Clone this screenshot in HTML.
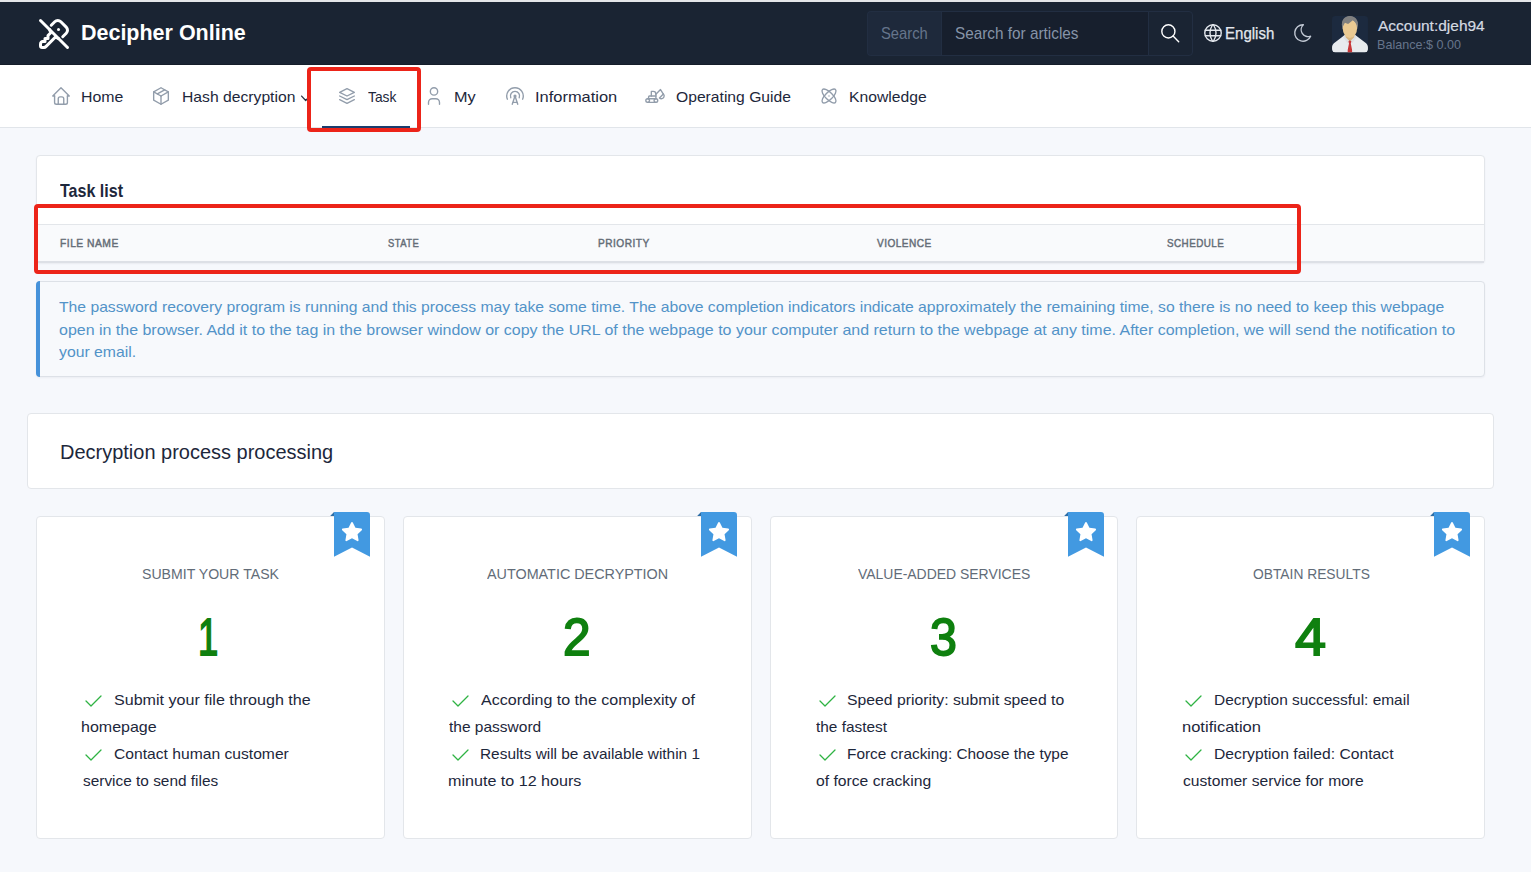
<!DOCTYPE html>
<html lang="en">
<head>
<meta charset="utf-8">
<title>Decipher Online - Task</title>
<style>
html,body{margin:0;padding:0;}
body{width:1531px;height:872px;position:relative;overflow:hidden;background:#f6f8fc;font-family:"Liberation Sans",sans-serif;}
.a{position:absolute;box-sizing:border-box;}
.t{position:absolute;white-space:nowrap;line-height:1;}
svg{position:absolute;overflow:visible;}
.ic{fill:none;stroke-linecap:round;stroke-linejoin:round;stroke-width:1.5;}
.nv{stroke:#929dab;}
.card{background:#fff;border:1px solid #e3e6ea;border-radius:4px;}
</style>
</head>
<body>
<!-- top strip + header -->
<div class="a" style="left:0;top:0;width:1531px;height:2px;background:#e4e6e9;"></div>
<header class="a" style="left:0;top:2px;width:1531px;height:63px;background:#1a2433;border-bottom:1px solid #151d2a;box-sizing:border-box;"></header>
<!-- logo -->
<svg class="ic" style="left:35.9px;top:16px;width:36px;height:36px;stroke:#fff;stroke-width:2;" viewBox="0 0 24 24"><path d="M10.17 6.159l2.316 -2.316a2.877 2.877 0 0 1 4.069 0l3.602 3.602a2.877 2.877 0 0 1 0 4.069l-2.33 2.33"/><path d="M14.931 14.948a2.863 2.863 0 0 1 -1.486 -.79l-.301 -.302l-6.558 6.558a2 2 0 0 1 -1.239 .578l-.175 .008h-1.172a1 1 0 0 1 -.993 -.883l-.007 -.117v-1.172a2 2 0 0 1 .467 -1.284l.119 -.13l.414 -.414h2v-2h2v-2l2.144 -2.144l-.301 -.301a2.863 2.863 0 0 1 -.794 -1.504"/><path d="M15 9h.01"/><path d="M3 3l18 18"/></svg>
<!-- search group -->
<div class="a" style="left:867px;top:11px;width:75px;height:45px;background:#1e293b;border:1px solid #222e42;border-right:none;border-radius:4px 0 0 4px;"></div>
<div class="a" style="left:941px;top:11px;width:208px;height:45px;background:#171f2d;border:1px solid #222e42;"></div>
<div class="a" style="left:1148px;top:11px;width:45px;height:45px;background:#1a2433;border:1px solid #222e42;border-radius:0 4px 4px 0;"></div>
<svg class="ic" style="left:1159px;top:22.1px;width:22.5px;height:22.5px;stroke:#fff;" viewBox="0 0 24 24"><path d="M10 10m-7 0a7 7 0 1 0 14 0a7 7 0 1 0 -14 0"/><path d="M21 21l-6 -6"/></svg>
<!-- globe -->
<svg class="ic" style="left:1202px;top:22.05px;width:22px;height:22px;stroke:#e4e8ee;" viewBox="0 0 24 24"><path d="M3 12a9 9 0 1 0 18 0a9 9 0 0 0 -18 0"/><path d="M3.6 9h16.8"/><path d="M3.6 15h16.8"/><path d="M11.5 3a17 17 0 0 0 0 18"/><path d="M12.5 3a17 17 0 0 1 0 18"/></svg>
<!-- moon -->
<svg class="ic" style="left:1291.9px;top:21.9px;width:22px;height:22px;stroke:#c3cad5;" viewBox="0 0 24 24"><path d="M12 3c.132 0 .263 0 .393 0a7.5 7.5 0 0 0 7.92 12.446a9 9 0 1 1 -8.313 -12.454z"/></svg>
<!-- avatar -->
<svg style="left:1332px;top:15.8px;width:36px;height:36.6px;" viewBox="0 0 36 36.6">
<defs><clipPath id="avc"><rect x="0" y="0" width="36" height="36.6" rx="3.5"/></clipPath><clipPath id="hrc"><rect x="0" y="0" width="36" height="13.6"/></clipPath></defs>
<g clip-path="url(#avc)">
<rect width="36" height="36.6" fill="#1c2a3f"/>
<path d="M12.400 19.300L1.900 27.300C.600 28.400 .050 29.800 .050 31.600V33.600a2.900 2.900 0 0 0 2.900 2.900H33.050a2.900 2.900 0 0 0 2.900 -2.900V31.600c0 -1.800 -.550 -3.200 -1.850 -4.300L23.600 19.300z" fill="#e8ebee"/>
<path d="M12.400 19.300l-1.600 1.400l4.700 6.200l2.400 -2.300l2.400 2.300l4.700 -6.200l-1.600 -1.400z" fill="#dde0e4"/>
<path d="M13.600 17h8.600v4.200l-4.300 4.200l-4.300 -4.200z" fill="#d9b57e"/>
<ellipse cx="17.900" cy="9" rx="8" ry="9" fill="#808080" clip-path="url(#hrc)"/>
<ellipse cx="17.900" cy="12.500" rx="7.150" ry="9.550" fill="#ebca92"/>
<path d="M10.300 11.500L12.900 6.700L16.100 8.100L20.900 4.200L24.300 7.200L25.500 11.500C27.300 3.500 22.500 0 17.900 0C13.300 0 8.500 3.500 10.300 11.500z" fill="#808080"/>
<path d="M16.400 25.400l1.500 -1.100l1.500 1.100l-.6 2.100l1.300 6.500v2.600h-4.400v-2.600l1.300 -6.500z" fill="#c7383a"/>
</g></svg>
<!-- nav -->
<nav class="a" style="left:0;top:65px;width:1531px;height:63px;background:#fff;border-bottom:1px solid #e1e5ea;"></nav>
<svg class="ic nv" style="left:50.15px;top:85.25px;width:22px;height:22px;" viewBox="0 0 24 24"><path d="M5 12l-2 0l9 -9l9 9l-2 0"/><path d="M5 12v7a2 2 0 0 0 2 2h10a2 2 0 0 0 2 -2v-7"/><path d="M9 21v-6a2 2 0 0 1 2 -2h2a2 2 0 0 1 2 2v6"/></svg>
<svg class="ic nv" style="left:150.3px;top:85.25px;width:22px;height:22px;" viewBox="0 0 24 24"><path d="M12 3l8 4.500l0 9l-8 4.500l-8 -4.500l0 -9l8 -4.500"/><path d="M12 12l8 -4.500"/><path d="M12 12l0 9"/><path d="M12 12l-8 -4.500"/><path d="M16 5.250l-8 4.500"/></svg>
<svg class="ic" style="left:299.5px;top:93px;width:12px;height:9px;stroke:#2a3444;stroke-width:1.3;" viewBox="0 0 12 9"><path d="M1.600 3.100l4.100 4.400l4.100 -4.400"/></svg>
<svg class="ic nv" style="left:336.2px;top:85.2px;width:22px;height:22px;" viewBox="0 0 24 24"><path d="M12 4l-8 4l8 4l8 -4l-8 -4"/><path d="M4 12l8 4l8 -4"/><path d="M4 16l8 4l8 -4"/></svg>
<svg class="ic nv" style="left:423.4px;top:85.1px;width:22px;height:22px;" viewBox="0 0 24 24"><path d="M8 7a4 4 0 1 0 8 0a4 4 0 0 0 -8 0"/><path d="M6 21v-2a4 4 0 0 1 4 -4h4a4 4 0 0 1 4 4v2"/></svg>
<svg class="ic nv" style="left:504px;top:85.25px;width:22px;height:22px;" viewBox="0 0 24 24"><path d="M12 12m-1 0a1 1 0 1 0 2 0a1 1 0 1 0 -2 0"/><path d="M16.616 13.924a5 5 0 1 0 -9.230 0"/><path d="M20.307 15.469a9 9 0 1 0 -16.615 0"/><path d="M9 21l3 -9l3 9"/><path d="M10 19h4"/></svg>
<svg class="ic nv" style="left:644.1px;top:85.3px;width:22px;height:22px;" viewBox="0 0 24 24"><path d="M4 17m-2 0a2 2 0 1 0 4 0a2 2 0 1 0 -4 0"/><path d="M13 17m-2 0a2 2 0 1 0 4 0a2 2 0 1 0 -4 0"/><path d="M13 19l-9 0"/><path d="M4 15l9 0"/><path d="M8 12v-5h2a3 3 0 0 1 3 3v5"/><path d="M5 15v-2a1 1 0 0 1 1 -1h7"/><path d="M21.120 9.880l-3.120 -4.880l-5 5"/><path d="M21.120 9.880a3 3 0 0 1 -2.120 5.120a3 3 0 0 1 -2.120 -.880l4.240 -4.240z"/></svg>
<svg class="ic nv" style="left:818.15px;top:84.95px;width:22px;height:22px;" viewBox="0 0 24 24"><path d="M12 12v.010"/><path d="M19.071 4.929c-1.562 -1.562 -6 .337 -9.900 4.243c-3.905 3.905 -5.804 8.337 -4.242 9.900c1.562 1.561 6 -.338 9.900 -4.244c3.905 -3.905 5.804 -8.337 4.242 -9.900"/><path d="M4.929 4.929c-1.562 1.562 .337 6 4.243 9.900c3.905 3.905 8.337 5.804 9.900 4.242c1.561 -1.562 -.338 -6 -4.244 -9.900c-3.905 -3.905 -8.337 -5.804 -9.900 -4.242"/></svg>
<!-- active underline -->
<div class="a" style="left:322px;top:126px;width:88px;height:2px;background:#1b3d6e;"></div>

<!-- task list card -->
<div class="a card" style="left:36px;top:155px;width:1448.500px;height:108px;box-shadow:0 1px 2px rgba(30,40,60,.06);"></div>
<div class="a" style="left:37px;top:224px;width:1446.500px;height:39px;background:#f9fafc;border-top:1px solid #e3e6ea;border-bottom:2px solid #dde0e6;"></div>

<!-- alert -->
<div class="a" style="left:36px;top:281px;width:1448.500px;height:95.500px;background:#f7f9fc;border:1px solid #dde1e7;border-radius:4px;box-shadow:0 1px 2px rgba(30,40,60,.05);"></div>
<div class="a" style="left:36px;top:281px;width:4.400px;height:95.500px;background:#4692da;border-radius:4px 0 0 4px;"></div>

<!-- section title card -->
<div class="a card" style="left:27px;top:413px;width:1467px;height:76px;"></div>

<!-- step cards -->
<div class="a card" style="left:36px;top:516px;width:348.800px;height:323px;"></div>
<div class="a card" style="left:403px;top:516px;width:348.800px;height:323px;"></div>
<div class="a card" style="left:770px;top:516px;width:348px;height:323px;"></div>
<div class="a card" style="left:1136px;top:516px;width:348.800px;height:323px;"></div>
<svg style="left:334.0px;top:512.2px;width:36px;height:45px;" viewBox="0 0 36 45"><path d="M0 0h33a3 3 0 0 1 3 3v41.700l-18 -9.200l-18 9.200z" fill="#4299e1"/><path d="M-3.800 4l3.800 -4v4z" fill="#2d6da6"/></svg>
<svg style="left:341.0px;top:521px;width:22px;height:22px;" viewBox="0 0 24 24"><path fill="#fff" d="M8.243 7.340l-6.380 .925l-.113 .023a1 1 0 0 0 -.440 1.684l4.622 4.499l-1.090 6.355l-.013 .110a1 1 0 0 0 1.464 .944l5.706 -3l5.693 3l.100 .046a1 1 0 0 0 1.352 -1.100l-1.091 -6.355l4.624 -4.500l.078 -.085a1 1 0 0 0 -.633 -1.620l-6.380 -.926l-2.852 -5.780a1 1 0 0 0 -1.794 0l-2.853 5.780z"/></svg>
<svg style="left:701.0px;top:512.2px;width:36px;height:45px;" viewBox="0 0 36 45"><path d="M0 0h33a3 3 0 0 1 3 3v41.700l-18 -9.200l-18 9.200z" fill="#4299e1"/><path d="M-3.800 4l3.800 -4v4z" fill="#2d6da6"/></svg>
<svg style="left:708.0px;top:521px;width:22px;height:22px;" viewBox="0 0 24 24"><path fill="#fff" d="M8.243 7.340l-6.380 .925l-.113 .023a1 1 0 0 0 -.440 1.684l4.622 4.499l-1.090 6.355l-.013 .110a1 1 0 0 0 1.464 .944l5.706 -3l5.693 3l.100 .046a1 1 0 0 0 1.352 -1.100l-1.091 -6.355l4.624 -4.500l.078 -.085a1 1 0 0 0 -.633 -1.620l-6.380 -.926l-2.852 -5.780a1 1 0 0 0 -1.794 0l-2.853 5.780z"/></svg>
<svg style="left:1068.0px;top:512.2px;width:36px;height:45px;" viewBox="0 0 36 45"><path d="M0 0h33a3 3 0 0 1 3 3v41.700l-18 -9.200l-18 9.200z" fill="#4299e1"/><path d="M-3.800 4l3.800 -4v4z" fill="#2d6da6"/></svg>
<svg style="left:1075.0px;top:521px;width:22px;height:22px;" viewBox="0 0 24 24"><path fill="#fff" d="M8.243 7.340l-6.380 .925l-.113 .023a1 1 0 0 0 -.440 1.684l4.622 4.499l-1.090 6.355l-.013 .110a1 1 0 0 0 1.464 .944l5.706 -3l5.693 3l.100 .046a1 1 0 0 0 1.352 -1.100l-1.091 -6.355l4.624 -4.500l.078 -.085a1 1 0 0 0 -.633 -1.620l-6.380 -.926l-2.852 -5.780a1 1 0 0 0 -1.794 0l-2.853 5.780z"/></svg>
<svg style="left:1434.0px;top:512.2px;width:36px;height:45px;" viewBox="0 0 36 45"><path d="M0 0h33a3 3 0 0 1 3 3v41.700l-18 -9.200l-18 9.200z" fill="#4299e1"/><path d="M-3.800 4l3.800 -4v4z" fill="#2d6da6"/></svg>
<svg style="left:1441.0px;top:521px;width:22px;height:22px;" viewBox="0 0 24 24"><path fill="#fff" d="M8.243 7.340l-6.380 .925l-.113 .023a1 1 0 0 0 -.440 1.684l4.622 4.499l-1.090 6.355l-.013 .110a1 1 0 0 0 1.464 .944l5.706 -3l5.693 3l.100 .046a1 1 0 0 0 1.352 -1.100l-1.091 -6.355l4.624 -4.500l.078 -.085a1 1 0 0 0 -.633 -1.620l-6.380 -.926l-2.852 -5.780a1 1 0 0 0 -1.794 0l-2.853 5.780z"/></svg>
<svg class="ic" style="left:80.9px;top:689.35px;width:24px;height:24px;stroke:#2fb344;stroke-width:1.3;" viewBox="0 0 24 24"><path d="M5 12l5 5l10 -10"/></svg>
<svg class="ic" style="left:80.9px;top:743.3px;width:24px;height:24px;stroke:#2fb344;stroke-width:1.3;" viewBox="0 0 24 24"><path d="M5 12l5 5l10 -10"/></svg>
<svg class="ic" style="left:447.9px;top:689.35px;width:24px;height:24px;stroke:#2fb344;stroke-width:1.3;" viewBox="0 0 24 24"><path d="M5 12l5 5l10 -10"/></svg>
<svg class="ic" style="left:447.9px;top:743.3px;width:24px;height:24px;stroke:#2fb344;stroke-width:1.3;" viewBox="0 0 24 24"><path d="M5 12l5 5l10 -10"/></svg>
<svg class="ic" style="left:814.9px;top:689.35px;width:24px;height:24px;stroke:#2fb344;stroke-width:1.3;" viewBox="0 0 24 24"><path d="M5 12l5 5l10 -10"/></svg>
<svg class="ic" style="left:814.9px;top:743.3px;width:24px;height:24px;stroke:#2fb344;stroke-width:1.3;" viewBox="0 0 24 24"><path d="M5 12l5 5l10 -10"/></svg>
<svg class="ic" style="left:1180.9px;top:689.35px;width:24px;height:24px;stroke:#2fb344;stroke-width:1.3;" viewBox="0 0 24 24"><path d="M5 12l5 5l10 -10"/></svg>
<svg class="ic" style="left:1180.9px;top:743.3px;width:24px;height:24px;stroke:#2fb344;stroke-width:1.3;" viewBox="0 0 24 24"><path d="M5 12l5 5l10 -10"/></svg>
<span class="t" style="left:81.22px;top:21.78px;font-size:22px;font-weight:700;color:#ffffff;transform:scaleX(0.9763);transform-origin:0 0;">Decipher Online</span>
<span class="t" style="left:881.20px;top:25.39px;font-size:16.2px;font-weight:400;color:#66758c;transform:scaleX(0.9108);transform-origin:0 0;">Search</span>
<span class="t" style="left:955.00px;top:25.39px;font-size:16.2px;font-weight:400;color:#8694a8;transform:scaleX(0.9466);transform-origin:0 0;">Search for articles</span>
<span class="t" style="left:1224.56px;top:25.99px;font-size:15.6px;font-weight:400;color:#e4e8ee;transform:scaleX(0.9652);transform-origin:0 0;-webkit-text-stroke:0.25px #e4e8ee;">English</span>
<span class="t" style="left:1377.50px;top:18.05px;font-size:15.3px;font-weight:400;color:#d5dae2;transform:scaleX(1.0118);transform-origin:0 0;-webkit-text-stroke:0.2px #d5dae2;">Account:djeh94</span>
<span class="t" style="left:1377.22px;top:39.06px;font-size:12.8px;font-weight:400;color:#66758c;transform:scaleX(0.9826);transform-origin:0 0;">Balance:$ 0.00</span>
<span class="t" style="left:81.04px;top:89.10px;font-size:15px;font-weight:400;color:#1d273b;transform:scaleX(1.0577);transform-origin:0 0;">Home</span>
<span class="t" style="left:181.75px;top:88.90px;font-size:15px;font-weight:400;color:#1d273b;transform:scaleX(1.0463);transform-origin:0 0;">Hash decryption</span>
<span class="t" style="left:367.90px;top:89.10px;font-size:15px;font-weight:400;color:#1d273b;transform:scaleX(0.9189);transform-origin:0 0;">Task</span>
<span class="t" style="left:454.42px;top:89.10px;font-size:15px;font-weight:400;color:#1d273b;transform:scaleX(1.0823);transform-origin:0 0;">My</span>
<span class="t" style="left:534.60px;top:89.10px;font-size:15px;font-weight:400;color:#1d273b;transform:scaleX(1.0964);transform-origin:0 0;">Information</span>
<span class="t" style="left:675.90px;top:89.10px;font-size:15px;font-weight:400;color:#1d273b;transform:scaleX(1.0444);transform-origin:0 0;">Operating Guide</span>
<span class="t" style="left:849.25px;top:89.10px;font-size:15px;font-weight:400;color:#1d273b;transform:scaleX(1.0455);transform-origin:0 0;">Knowledge</span>
<span class="t" style="left:59.90px;top:182.92px;font-size:17.7px;font-weight:700;color:#1d273b;transform:scaleX(0.9069);transform-origin:0 0;">Task list</span>
<span class="t" style="left:60.12px;top:237.86px;font-size:10.8px;font-weight:400;color:#656d77;letter-spacing:0.5px;transform:scaleX(0.9565);transform-origin:0 0;-webkit-text-stroke:0.45px #656d77;">FILE NAME</span>
<span class="t" style="left:388.23px;top:237.86px;font-size:10.8px;font-weight:400;color:#656d77;letter-spacing:0.5px;transform:scaleX(0.8731);transform-origin:0 0;-webkit-text-stroke:0.45px #656d77;">STATE</span>
<span class="t" style="left:597.73px;top:237.86px;font-size:10.8px;font-weight:400;color:#656d77;letter-spacing:0.5px;transform:scaleX(0.9403);transform-origin:0 0;-webkit-text-stroke:0.45px #656d77;">PRIORITY</span>
<span class="t" style="left:876.73px;top:237.86px;font-size:10.8px;font-weight:400;color:#656d77;letter-spacing:0.5px;transform:scaleX(0.9335);transform-origin:0 0;-webkit-text-stroke:0.45px #656d77;">VIOLENCE</span>
<span class="t" style="left:1166.92px;top:237.86px;font-size:10.8px;font-weight:400;color:#656d77;letter-spacing:0.5px;transform:scaleX(0.9107);transform-origin:0 0;-webkit-text-stroke:0.45px #656d77;">SCHEDULE</span>
<span class="t" style="left:59.00px;top:299.10px;font-size:15px;font-weight:400;color:#5293c8;transform:scaleX(1.0465);transform-origin:0 0;">The password recovery program is running and this process may take some time. The above completion indicators indicate approximately the remaining time, so there is no need to keep this webpage</span>
<span class="t" style="left:58.50px;top:321.60px;font-size:15px;font-weight:400;color:#5293c8;transform:scaleX(1.0649);transform-origin:0 0;">open in the browser. Add it to the tag in the browser window or copy the URL of the webpage to your computer and return to the webpage at any time. After completion, we will send the notification to</span>
<span class="t" style="left:58.50px;top:343.80px;font-size:15px;font-weight:400;color:#5293c8;transform:scaleX(1.0514);transform-origin:0 0;">your email.</span>
<span class="t" style="left:59.56px;top:442.56px;font-size:19.3px;font-weight:400;color:#1d273b;transform:scaleX(1.0362);transform-origin:0 0;">Decryption process processing</span>
<span class="t" style="left:141.60px;top:565.66px;font-size:15.4px;font-weight:400;color:#626c78;transform:scaleX(0.9169);transform-origin:0 0;">SUBMIT YOUR TASK</span>
<span class="t" style="left:487.10px;top:565.66px;font-size:15.4px;font-weight:400;color:#626c78;transform:scaleX(0.9332);transform-origin:0 0;">AUTOMATIC DECRYPTION</span>
<span class="t" style="left:857.90px;top:565.66px;font-size:15.4px;font-weight:400;color:#626c78;transform:scaleX(0.9058);transform-origin:0 0;">VALUE-ADDED SERVICES</span>
<span class="t" style="left:1252.50px;top:565.66px;font-size:15.4px;font-weight:400;color:#626c78;transform:scaleX(0.8969);transform-origin:0 0;">OBTAIN RESULTS</span>
<span class="t" style="left:198.12px;top:610.76px;font-size:52.5px;font-weight:400;color:#0f800f;transform:scaleX(0.6957);transform-origin:0 0;-webkit-text-stroke:1.8px #0f800f;">1</span>
<span class="t" style="left:563.01px;top:610.76px;font-size:52.5px;font-weight:400;color:#0f800f;transform:scaleX(0.9440);transform-origin:0 0;-webkit-text-stroke:1.8px #0f800f;">2</span>
<span class="t" style="left:929.96px;top:610.76px;font-size:52.5px;font-weight:400;color:#0f800f;transform:scaleX(0.9200);transform-origin:0 0;-webkit-text-stroke:1.8px #0f800f;">3</span>
<span class="t" style="left:1295.24px;top:610.76px;font-size:52.5px;font-weight:400;color:#0f800f;transform:scaleX(1.0630);transform-origin:0 0;-webkit-text-stroke:1.8px #0f800f;">4</span>
<span class="t" style="left:114.00px;top:692.10px;font-size:15px;font-weight:400;color:#1d273b;transform:scaleX(1.0721);transform-origin:0 0;">Submit your file through the</span>
<span class="t" style="left:81.43px;top:719.00px;font-size:15px;font-weight:400;color:#1d273b;transform:scaleX(1.0669);transform-origin:0 0;">homepage</span>
<span class="t" style="left:114.00px;top:746.00px;font-size:15px;font-weight:400;color:#1d273b;transform:scaleX(1.0431);transform-origin:0 0;">Contact human customer</span>
<span class="t" style="left:82.50px;top:773.00px;font-size:15px;font-weight:400;color:#1d273b;transform:scaleX(1.0265);transform-origin:0 0;">service to send files</span>
<span class="t" style="left:480.50px;top:692.10px;font-size:15px;font-weight:400;color:#1d273b;transform:scaleX(1.0690);transform-origin:0 0;">According to the complexity of</span>
<span class="t" style="left:449.20px;top:719.00px;font-size:15px;font-weight:400;color:#1d273b;transform:scaleX(1.0329);transform-origin:0 0;">the password</span>
<span class="t" style="left:480.07px;top:746.00px;font-size:15px;font-weight:400;color:#1d273b;transform:scaleX(1.0266);transform-origin:0 0;">Results will be available within 1</span>
<span class="t" style="left:448.13px;top:773.00px;font-size:15px;font-weight:400;color:#1d273b;transform:scaleX(1.0738);transform-origin:0 0;">minute to 12 hours</span>
<span class="t" style="left:847.40px;top:692.10px;font-size:15px;font-weight:400;color:#1d273b;transform:scaleX(1.0502);transform-origin:0 0;">Speed priority: submit speed to</span>
<span class="t" style="left:815.80px;top:719.00px;font-size:15px;font-weight:400;color:#1d273b;transform:scaleX(1.0266);transform-origin:0 0;">the fastest</span>
<span class="t" style="left:846.97px;top:746.00px;font-size:15px;font-weight:400;color:#1d273b;transform:scaleX(1.0256);transform-origin:0 0;">Force cracking: Choose the type</span>
<span class="t" style="left:815.80px;top:773.00px;font-size:15px;font-weight:400;color:#1d273b;transform:scaleX(1.0465);transform-origin:0 0;">of force cracking</span>
<span class="t" style="left:1213.57px;top:692.10px;font-size:15px;font-weight:400;color:#1d273b;transform:scaleX(1.0289);transform-origin:0 0;">Decryption successful: email</span>
<span class="t" style="left:1182.20px;top:719.00px;font-size:15px;font-weight:400;color:#1d273b;transform:scaleX(1.1013);transform-origin:0 0;">notification</span>
<span class="t" style="left:1213.56px;top:746.00px;font-size:15px;font-weight:400;color:#1d273b;transform:scaleX(1.0450);transform-origin:0 0;">Decryption failed: Contact</span>
<span class="t" style="left:1182.70px;top:773.00px;font-size:15px;font-weight:400;color:#1d273b;transform:scaleX(1.0426);transform-origin:0 0;">customer service for more</span>
<!-- red annotation rectangles -->
<div class="a" style="left:307px;top:67px;width:114px;height:65px;border:4px solid #ec2419;border-radius:4px;"></div>
<div class="a" style="left:34px;top:204px;width:1267px;height:70px;border:4px solid #ec2419;border-radius:4px;"></div>
</body>
</html>
